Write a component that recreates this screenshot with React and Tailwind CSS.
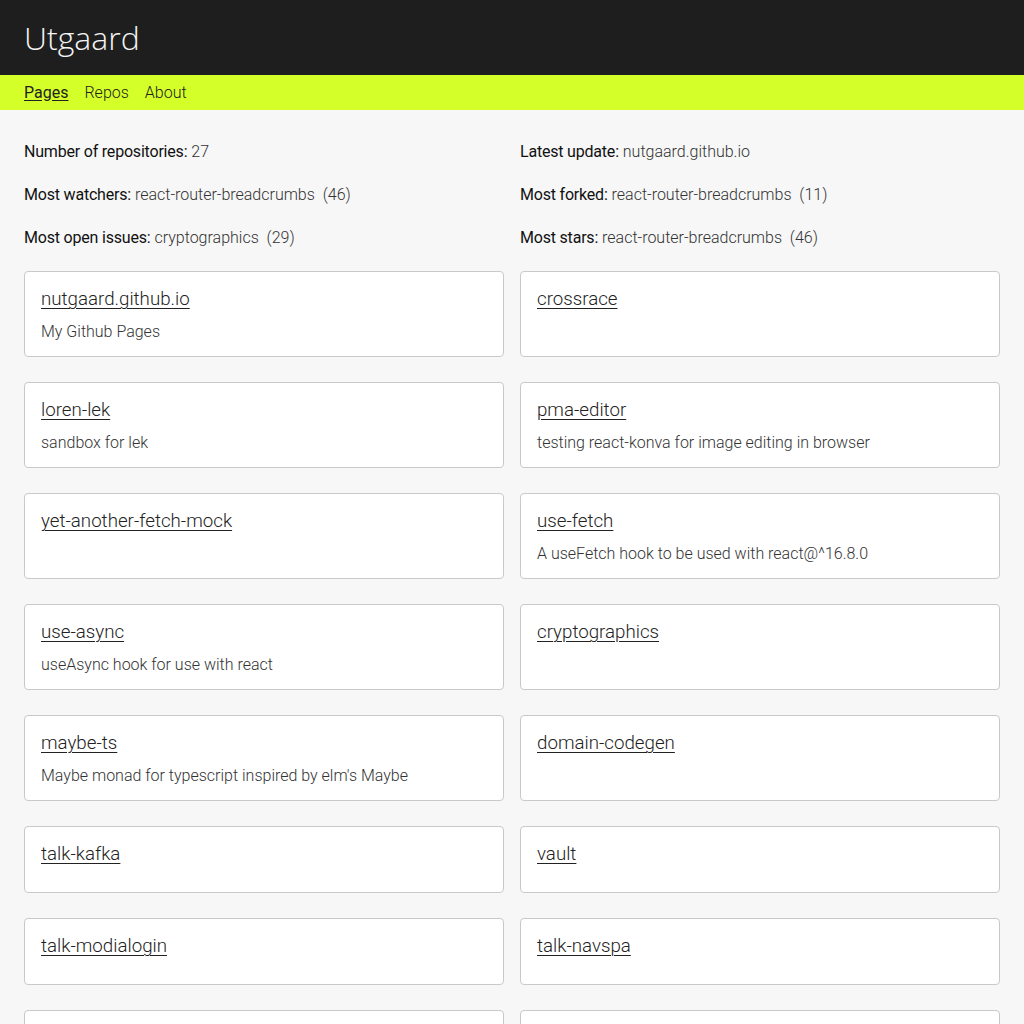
const stats = [
    ['Number of repositories:', '27'],
    ['Latest update:', 'nutgaard.github.io'],
    ['Most watchers:', 'react-router-breadcrumbs\u00a0\u00a0(46)'],
    ['Most forked:', 'react-router-breadcrumbs\u00a0\u00a0(11)'],
    ['Most open issues:', 'cryptographics\u00a0\u00a0(29)'],
    ['Most stars:', 'react-router-breadcrumbs\u00a0\u00a0(46)'],
];

const repos = [
    { name: 'nutgaard.github.io', description: 'My Github Pages' },
    { name: 'crossrace' },
    { name: 'loren-lek', description: 'sandbox for lek' },
    { name: 'pma-editor', description: 'testing react-konva for image editing in browser' },
    { name: 'yet-another-fetch-mock' },
    { name: 'use-fetch', description: 'A useFetch hook to be used with react@^16.8.0' },
    { name: 'use-async', description: 'useAsync hook for use with react' },
    { name: 'cryptographics' },
    { name: 'maybe-ts', description: "Maybe monad for typescript inspired by elm's Maybe" },
    { name: 'domain-codegen' },
    { name: 'talk-kafka' },
    { name: 'vault' },
    { name: 'talk-modialogin' },
    { name: 'talk-navspa' },
    { name: 'react-router-breadcrumbs', description: 'Breadcrumbs for react-router' },
    { name: 'react-treeview' },
];

function RepoCard({ repo }) {
    return (
        <div className="bg-white border border-[#c9c9c9] rounded-[4px] p-4">
            <a href="#" className="block text-[18.72px] leading-[23px] font-light text-[#222] underline underline-offset-[3px] decoration-1 mb-[10px] w-fit">
                {repo.name}
            </a>
            {repo.description && (
                <p className="text-[16px] leading-[17px] pt-[2px] font-light text-[#333]">{repo.description}</p>
            )}
        </div>
    );
}

export default function App() {
    return (
        <div className="min-h-screen bg-[#f7f7f7] font-['Roboto',sans-serif] text-[#222]">
            <header className="bg-[#1e1e1e] h-[75px] px-6 flex items-center">
                <h1 className="font-['Open_Sans',sans-serif] font-light text-[32px] text-[#f4f4f4] leading-none mt-[1px]">Utgaard</h1>
            </header>
            <nav className="bg-[#d4ff28] h-[35px] px-6 flex items-center gap-4 text-[16px] text-[#222]">
                <a href="#" className="font-normal underline underline-offset-2">Pages</a>
                <a href="#" className="font-light">Repos</a>
                <a href="#" className="font-light">About</a>
            </nav>

            <main className="px-6 pt-[30px] pb-6">
                <div className="grid grid-cols-2 gap-x-4 gap-y-[19px] text-[16px] leading-6">
                    {stats.map(([label, value]) => (
                        <p key={label} className="text-[#111]">
                            <span className="font-normal tracking-[-0.2px]">{label}</span>{' '}
                            <span className="font-light text-[#333]">{value}</span>
                        </p>
                    ))}
                </div>

                <div className="grid grid-cols-2 gap-x-4 gap-y-[25px] mt-[21px]">
                    {repos.map((repo) => (
                        <RepoCard key={repo.name} repo={repo} />
                    ))}
                </div>
            </main>
        </div>
    );
}
